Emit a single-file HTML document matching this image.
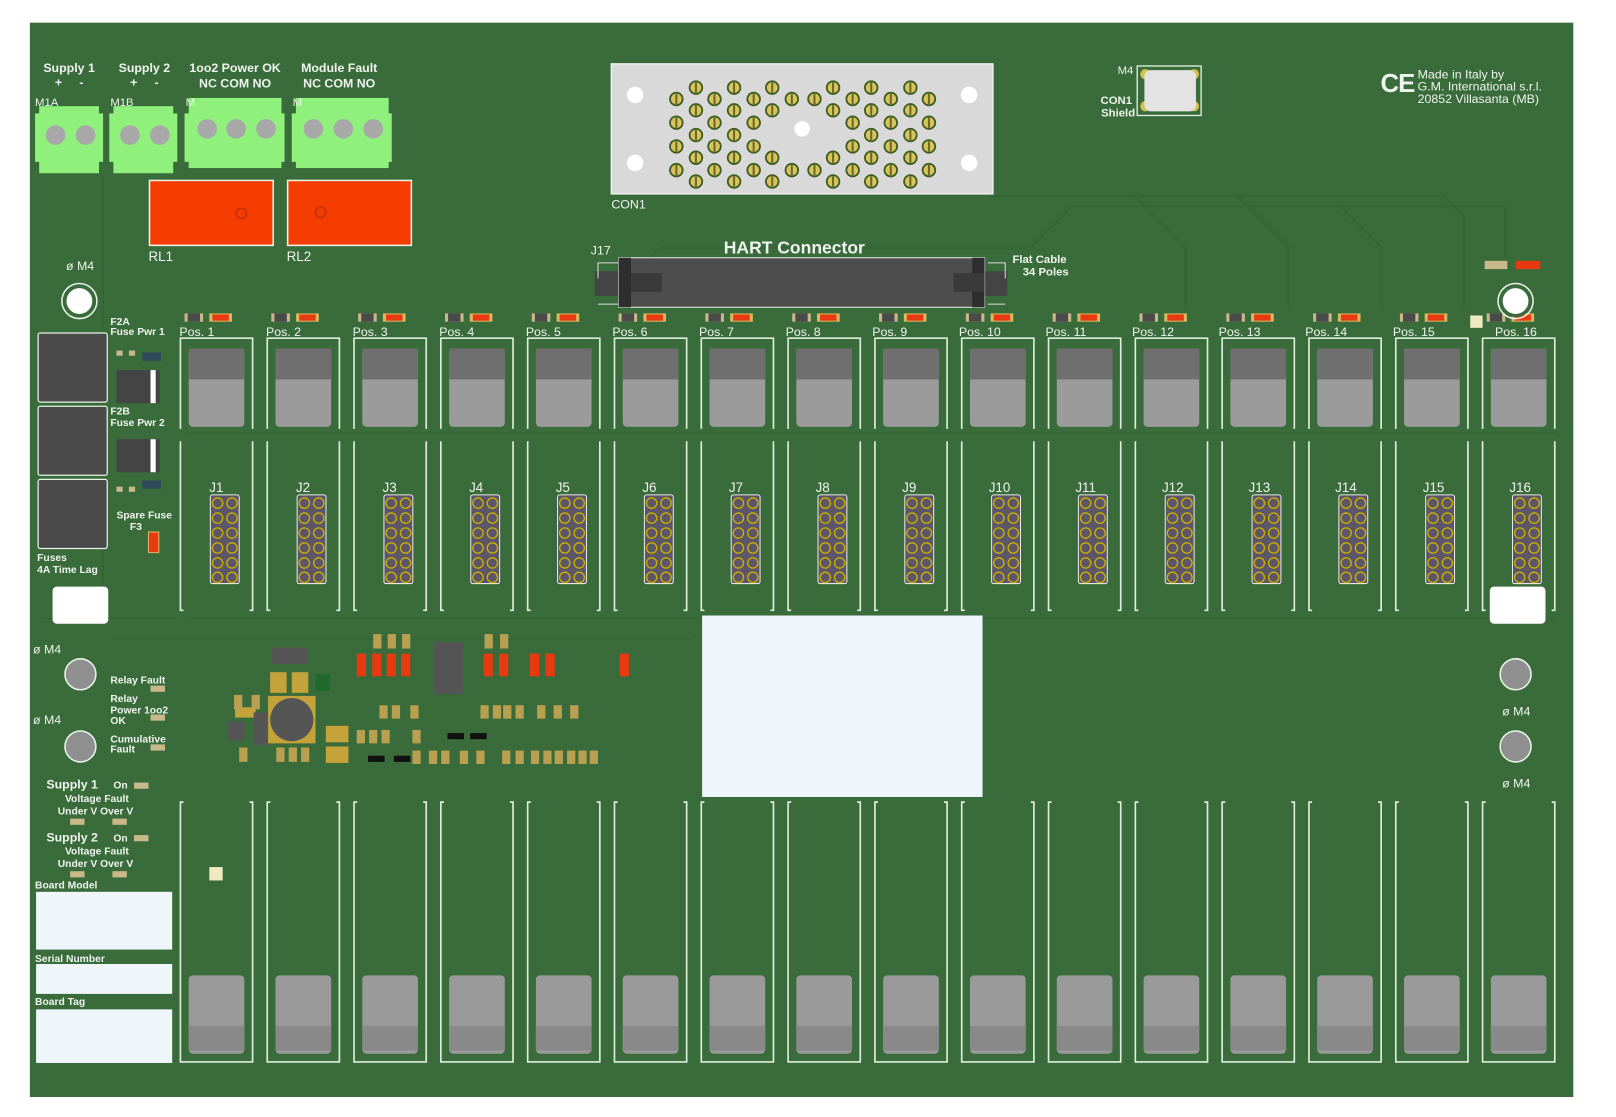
<!DOCTYPE html>
<html><head><meta charset="utf-8"><style>
html,body{margin:0;padding:0;background:#fff;width:1616px;height:1117px;overflow:hidden}
svg{display:block}
text{font-family:"Liberation Sans",sans-serif;fill:#eef4ee}
.b{font-weight:bold}
</style></head><body>
<svg width="1616" height="1117" viewBox="0 0 1567.4 1083.4" xmlns="http://www.w3.org/2000/svg">
<defs>
<g id="col">
 <rect x="4" y="304" width="18" height="8" fill="#c9b98a"/><rect x="7" y="304" width="12" height="8" fill="#4a4a4a"/>
 <rect x="28" y="304" width="22" height="8" fill="#d9b860"/><rect x="31" y="305" width="16" height="6" fill="#e83a10"/>
 <path d="M0,416 V328 H70 V416" stroke="#dcefdc" stroke-width="1.6" fill="none"/>
 <rect x="8" y="338" width="54" height="76" rx="4" fill="#9b9b9b"/>
 <rect x="8" y="338" width="54" height="30" fill="#6f6f6f"/>
 <path d="M0,428 V592 H3 M70,428 V592 H67" stroke="#dcefdc" stroke-width="1.6" fill="none"/>
 <rect x="29" y="480" width="28" height="86" rx="2" fill="#5d5668" stroke="#e8e8e8" stroke-width="1"/>
 <g fill="none" stroke="#c8b000" stroke-width="1.3">
  <circle cx="36" cy="488" r="5"/><circle cx="50" cy="488" r="5"/>
  <circle cx="36" cy="502.5" r="5"/><circle cx="50" cy="502.5" r="5"/>
  <circle cx="36" cy="517" r="5"/><circle cx="50" cy="517" r="5"/>
  <circle cx="36" cy="531.5" r="5"/><circle cx="50" cy="531.5" r="5"/>
  <circle cx="36" cy="546" r="5"/><circle cx="50" cy="546" r="5"/>
  <circle cx="36" cy="560" r="5"/><circle cx="50" cy="560" r="5"/>
 </g>
 <path d="M3,778 H0 V1030 H70 V778 H67" stroke="#dcefdc" stroke-width="1.6" fill="none"/>
 <rect x="8" y="946" width="54" height="76" rx="4" fill="#9a9a9a"/>
 <rect x="8" y="995" width="54" height="24" fill="#898989"/>
</g>
<g id="pin"><circle r="7" fill="#3d5e22"/><circle r="5.2" fill="#d8c45a"/><rect x="-1" y="-5" width="2" height="10" fill="#6a6a30"/></g>
<g id="tb"><circle r="9.5" fill="#a8a8a8"/></g>
</defs>
<rect x="0" y="0" width="1567.4" height="1083.4" fill="#fff"/>
<rect x="29" y="22" width="1497" height="1042" fill="#3a6b3a"/>
<g stroke="#366636" stroke-width="2" fill="none">
<path d="M600,300 V280 L640,240 H1000 L1040,200 H1460 V250"/>
<path d="M960,190 H1400 L1420,210 V300"/>
<path d="M100,170 V600 M110,620 H670 M40,600 H170"/>
<path d="M180,600 H1510 M180,420 H1510"/>
<path d="M1100,190 L1150,240 V300 M1200,190 L1250,240 V300 M1300,200 L1340,240 V300"/>
</g>
<use href="#col" x="175"/><use href="#col" x="259.2"/><use href="#col" x="343.4"/><use href="#col" x="427.6"/>
<use href="#col" x="511.8"/><use href="#col" x="596"/><use href="#col" x="680.2"/><use href="#col" x="764.4"/>
<use href="#col" x="848.6"/><use href="#col" x="932.8"/><use href="#col" x="1017"/><use href="#col" x="1101.2"/>
<use href="#col" x="1185.4"/><use href="#col" x="1269.6"/><use href="#col" x="1353.8"/><use href="#col" x="1438"/>
<g font-size="12">
<text x="174" y="326">Pos. 1</text><text x="258" y="326">Pos. 2</text><text x="342" y="326">Pos. 3</text><text x="426" y="326">Pos. 4</text>
<text x="510" y="326">Pos. 5</text><text x="594" y="326">Pos. 6</text><text x="678" y="326">Pos. 7</text><text x="762" y="326">Pos. 8</text>
<text x="846" y="326">Pos. 9</text><text x="930" y="326">Pos. 10</text><text x="1014" y="326">Pos. 11</text><text x="1098" y="326">Pos. 12</text>
<text x="1182" y="326">Pos. 13</text><text x="1266" y="326">Pos. 14</text><text x="1351" y="326">Pos. 15</text><text x="1450" y="326">Pos. 16</text>
</g>
<g font-size="13">
<text x="203" y="477">J1</text><text x="287" y="477">J2</text><text x="371" y="477">J3</text><text x="455" y="477">J4</text>
<text x="539" y="477">J5</text><text x="623" y="477">J6</text><text x="707" y="477">J7</text><text x="791" y="477">J8</text>
<text x="875" y="477">J9</text><text x="959" y="477">J10</text><text x="1043" y="477">J11</text><text x="1127" y="477">J12</text>
<text x="1211" y="477">J13</text><text x="1295" y="477">J14</text><text x="1380" y="477">J15</text><text x="1464" y="477">J16</text>
</g>
<g fill="#8ff07c">
<rect x="38" y="103" width="58" height="65"/><rect x="34" y="110" width="66" height="47"/>
<rect x="110" y="103" width="58" height="65"/><rect x="106" y="110" width="66" height="47"/>
<rect x="183" y="95" width="90" height="68"/><rect x="179" y="110" width="97" height="47"/>
<rect x="287" y="95" width="90" height="68"/><rect x="283" y="110" width="97" height="47"/>
</g>
<use href="#tb" x="54" y="131"/><use href="#tb" x="83" y="131"/><use href="#tb" x="126" y="131"/><use href="#tb" x="155" y="131"/>
<use href="#tb" x="201" y="125"/><use href="#tb" x="229" y="125"/><use href="#tb" x="258" y="125"/>
<use href="#tb" x="304" y="125"/><use href="#tb" x="333" y="125"/><use href="#tb" x="362" y="125"/>
<g class="b" font-size="12" text-anchor="middle">
<text x="67" y="70">Supply 1</text><text x="67" y="84">+&#160;&#160;&#160;&#160;&#160;-</text>
<text x="140" y="70">Supply 2</text><text x="140" y="84">+&#160;&#160;&#160;&#160;&#160;-</text>
<text x="228" y="70">1oo2 Power OK</text><text x="228" y="85">NC COM NO</text>
<text x="329" y="70">Module Fault</text><text x="329" y="85">NC COM NO</text>
</g>
<g font-size="11"><text x="34" y="103">M1A</text><text x="107" y="103">M1B</text><text x="180" y="103">M</text><text x="284" y="103">M</text></g>
<rect x="145" y="175" width="120" height="63" fill="#f53c00" stroke="#e8f4e8" stroke-width="1.5"/>
<rect x="279" y="175" width="120" height="63" fill="#f53c00" stroke="#e8f4e8" stroke-width="1.5"/>
<circle cx="234" cy="207" r="5" fill="none" stroke="#c03000" stroke-width="1.5"/><circle cx="311" cy="206" r="5" fill="none" stroke="#c03000" stroke-width="1.5"/>
<g font-size="13"><text x="144" y="253">RL1</text><text x="278" y="253">RL2</text></g>
<rect x="593" y="62" width="370" height="126" fill="#d9d9d9" stroke="#eee" stroke-width="1.5"/>
<g fill="#fff"><circle cx="616" cy="92" r="8"/><circle cx="940" cy="92" r="8"/><circle cx="616" cy="158" r="8"/><circle cx="940" cy="158" r="8"/><circle cx="778" cy="125" r="7.5"/></g>
<g>
<use href="#pin" x="656" y="96"/><use href="#pin" x="656" y="119"/><use href="#pin" x="656" y="142"/><use href="#pin" x="656" y="165"/>
<use href="#pin" x="675" y="85"/><use href="#pin" x="675" y="107"/><use href="#pin" x="675" y="131"/><use href="#pin" x="675" y="153"/><use href="#pin" x="675" y="176"/>
<use href="#pin" x="693" y="96"/><use href="#pin" x="693" y="119"/><use href="#pin" x="693" y="142"/><use href="#pin" x="693" y="165"/>
<use href="#pin" x="712" y="85"/><use href="#pin" x="712" y="107"/><use href="#pin" x="712" y="131"/><use href="#pin" x="712" y="153"/><use href="#pin" x="712" y="176"/>
<use href="#pin" x="731" y="96"/><use href="#pin" x="731" y="119"/><use href="#pin" x="731" y="142"/><use href="#pin" x="731" y="165"/>
<use href="#pin" x="749" y="85"/><use href="#pin" x="749" y="107"/><use href="#pin" x="749" y="153"/><use href="#pin" x="749" y="176"/>
<use href="#pin" x="768" y="96"/><use href="#pin" x="768" y="165"/>
<use href="#pin" x="790" y="96"/><use href="#pin" x="790" y="165"/>
<use href="#pin" x="808" y="85"/><use href="#pin" x="808" y="107"/><use href="#pin" x="808" y="153"/><use href="#pin" x="808" y="176"/>
<use href="#pin" x="827" y="96"/><use href="#pin" x="827" y="119"/><use href="#pin" x="827" y="142"/><use href="#pin" x="827" y="165"/>
<use href="#pin" x="845" y="85"/><use href="#pin" x="845" y="107"/><use href="#pin" x="845" y="131"/><use href="#pin" x="845" y="153"/><use href="#pin" x="845" y="176"/>
<use href="#pin" x="864" y="96"/><use href="#pin" x="864" y="119"/><use href="#pin" x="864" y="142"/><use href="#pin" x="864" y="165"/>
<use href="#pin" x="883" y="85"/><use href="#pin" x="883" y="107"/><use href="#pin" x="883" y="131"/><use href="#pin" x="883" y="153"/><use href="#pin" x="883" y="176"/>
<use href="#pin" x="901" y="96"/><use href="#pin" x="901" y="119"/><use href="#pin" x="901" y="142"/><use href="#pin" x="901" y="165"/>
</g>
<text x="593" y="202" font-size="12">CON1</text>
<rect x="577" y="263" width="400" height="24" fill="#444"/>
<rect x="600" y="250" width="355" height="48" fill="#4d4d4d" stroke="#eee" stroke-width="1"/>
<rect x="600" y="250" width="12" height="48" fill="#2e2e2e"/><rect x="943" y="250" width="12" height="48" fill="#2e2e2e"/>
<rect x="612" y="265" width="30" height="18" fill="#3a3a3a"/><rect x="925" y="265" width="30" height="18" fill="#3a3a3a"/>
<path d="M580,270 V255 H600 M580,295 H600 M958,255 H975 V270 M958,295 H975" stroke="#ddd" fill="none"/>
<text x="573" y="247" font-size="12">J17</text>
<text x="702" y="246" font-size="17" class="b">HART Connector</text>
<g class="b" font-size="11"><text x="982" y="255">Flat Cable</text><text x="992" y="267">34 Poles</text></g>
<rect x="1103" y="64" width="62" height="48" fill="none" stroke="#e0eee0" stroke-width="1.3"/>
<circle cx="1111" cy="72" r="5" fill="#d5c050"/><circle cx="1158" cy="72" r="5" fill="#d5c050"/><circle cx="1111" cy="103" r="5" fill="#d5c050"/><circle cx="1158" cy="103" r="5" fill="#d5c050"/>
<rect x="1110" y="68" width="50" height="40" rx="6" fill="#e3e3e3"/>
<text x="1084" y="72" font-size="11">M4</text>
<g class="b" font-size="11" text-anchor="end"><text x="1098" y="101">CON1</text><text x="1101" y="113">Shield</text></g>
<text x="1339" y="89" font-size="25" class="b" letter-spacing="-1">CE</text>
<g font-size="12"><text x="1375" y="76">Made in Italy by</text><text x="1375" y="88">G.M. International s.r.l.</text><text x="1375" y="100">20852 Villasanta (MB)</text></g>
<rect x="1440" y="253" width="22" height="8" fill="#c9b98a"/><rect x="1470" y="253" width="24" height="8" fill="#e83a10"/>
<rect x="1426" y="306" width="12" height="12" fill="#eee9c0"/>
<circle cx="77" cy="292" r="14" fill="#fff" stroke="#3a6b3a" stroke-width="3"/><circle cx="77" cy="292" r="17" fill="none" stroke="#e8f4e8" stroke-width="1.5"/>
<circle cx="1470" cy="292" r="14" fill="#fff" stroke="#3a6b3a" stroke-width="3"/><circle cx="1470" cy="292" r="17" fill="none" stroke="#e8f4e8" stroke-width="1.5"/>
<g fill="#8f8f8f" stroke="#e8f4e8" stroke-width="1.5">
<circle cx="78" cy="654" r="15"/><circle cx="78" cy="724" r="15"/><circle cx="1470" cy="654" r="15"/><circle cx="1470" cy="724" r="15"/>
</g>
<g font-size="12"><text x="64" y="262">ø M4</text><text x="32" y="634">ø M4</text><text x="32" y="702">ø M4</text><text x="1457" y="694">ø M4</text><text x="1457" y="764">ø M4</text></g>
<g fill="#4a4a4a" stroke="#e6f2e6" stroke-width="1.2">
<rect x="37" y="323" width="67" height="67" rx="2"/><rect x="37" y="394" width="67" height="67" rx="2"/><rect x="37" y="465" width="67" height="67" rx="2"/>
</g>
<g fill="#444"><rect x="113" y="359" width="42" height="32"/><rect x="113" y="426" width="42" height="32"/></g>
<rect x="146" y="359" width="5" height="32" fill="#fff"/><rect x="146" y="426" width="5" height="32" fill="#fff"/>
<rect x="144" y="516" width="10" height="20" fill="#e83a10" stroke="#d9b860"/>
<rect x="138" y="342" width="18" height="8" fill="#2f4a5a"/><rect x="138" y="466" width="18" height="8" fill="#2f4a5a"/>
<g fill="#c9b98a"><rect x="113" y="340" width="6" height="5"/><rect x="125" y="340" width="6" height="5"/><rect x="113" y="472" width="6" height="5"/><rect x="125" y="472" width="6" height="5"/></g>
<g class="b" font-size="10"><text x="107" y="315">F2A</text><text x="107" y="325">Fuse Pwr 1</text><text x="107" y="402">F2B</text><text x="107" y="413">Fuse Pwr 2</text>
<text x="113" y="503">Spare Fuse</text><text x="126" y="514">F3</text><text x="36" y="544">Fuses</text><text x="36" y="556">4A Time Lag</text></g>
<rect x="51" y="569" width="54" height="36" rx="4" fill="#fff"/><rect x="1445" y="569" width="54" height="36" rx="4" fill="#fff"/>
<rect x="681" y="597" width="272" height="176" fill="#eef6fb"/>
<g class="b" font-size="10">
<text x="107" y="663">Relay Fault</text><text x="107" y="681">Relay</text><text x="107" y="692">Power 1oo2</text><text x="107" y="702">OK</text>
<text x="107" y="720">Cumulative</text><text x="107" y="730">Fault</text>
<text x="110" y="765">On</text><text x="110" y="816">On</text>
<text x="63" y="778">Voltage Fault</text><text x="56" y="790">Under V Over V</text>
<text x="63" y="829">Voltage Fault</text><text x="56" y="841">Under V Over V</text>
<text x="34" y="862">Board Model</text><text x="34" y="933">Serial Number</text><text x="34" y="975">Board Tag</text>
</g>
<g class="b" font-size="12"><text x="45" y="765">Supply 1</text><text x="45" y="816">Supply 2</text></g>
<g fill="#c9b98a"><rect x="146" y="665" width="14" height="6"/><rect x="146" y="693" width="14" height="6"/><rect x="146" y="722" width="14" height="6"/>
<rect x="130" y="759" width="14" height="6"/><rect x="130" y="810" width="14" height="6"/><rect x="68" y="794" width="14" height="6"/><rect x="109" y="794" width="14" height="6"/><rect x="68" y="845" width="14" height="6"/><rect x="109" y="845" width="14" height="6"/></g>
<g fill="#eef6fa"><rect x="35" y="865" width="132" height="56"/><rect x="35" y="935" width="132" height="29"/><rect x="35" y="979" width="132" height="52"/></g>
<rect x="203" y="841" width="13" height="13" fill="#eee9c0"/>
<g fill="#c4a43a">
<rect x="262" y="652" width="16" height="20"/><rect x="283" y="652" width="16" height="20"/><rect x="316" y="704" width="22" height="16"/><rect x="316" y="724" width="22" height="16"/>
<rect x="260" y="675" width="46" height="46"/><rect x="228" y="686" width="12" height="10"/><rect x="240" y="686" width="8" height="10"/>
</g>
<circle cx="283" cy="698" r="21" fill="#555"/>
<rect x="264" y="628" width="34" height="16" fill="#555"/><rect x="246" y="691" width="14" height="32" fill="#555"/><rect x="221" y="700" width="16" height="18" fill="#555"/>
<rect x="306" y="654" width="14" height="16" fill="#1f6a2a"/>
<rect x="421" y="623" width="28" height="50" fill="#555"/>
<g fill="#e83a10">
<rect x="346" y="634" width="9" height="22"/><rect x="361" y="634" width="9" height="22"/><rect x="375" y="634" width="9" height="22"/><rect x="389" y="634" width="9" height="22"/>
<rect x="469" y="634" width="9" height="22"/><rect x="484" y="634" width="9" height="22"/><rect x="514" y="634" width="9" height="22"/><rect x="529" y="634" width="9" height="22"/><rect x="601" y="634" width="9" height="22"/>
</g>
<g fill="#111"><rect x="357" y="733" width="16" height="6"/><rect x="382" y="733" width="16" height="6"/><rect x="434" y="711" width="16" height="6"/><rect x="456" y="711" width="16" height="6"/></g>
<g fill="#b8a050">
<rect x="362" y="615" width="8" height="14"/><rect x="376" y="615" width="8" height="14"/><rect x="390" y="615" width="8" height="14"/><rect x="470" y="615" width="8" height="14"/><rect x="485" y="615" width="8" height="14"/>
<rect x="368" y="684" width="8" height="13"/><rect x="380" y="684" width="8" height="13"/><rect x="398" y="684" width="8" height="13"/><rect x="466" y="684" width="8" height="13"/><rect x="478" y="684" width="8" height="13"/><rect x="488" y="684" width="8" height="13"/><rect x="500" y="684" width="8" height="13"/><rect x="521" y="684" width="8" height="13"/><rect x="537" y="684" width="8" height="13"/><rect x="553" y="684" width="8" height="13"/>
<rect x="346" y="708" width="8" height="13"/><rect x="358" y="708" width="8" height="13"/><rect x="370" y="708" width="8" height="13"/><rect x="400" y="708" width="8" height="13"/>
<rect x="400" y="728" width="8" height="13"/><rect x="416" y="728" width="8" height="13"/><rect x="428" y="728" width="8" height="13"/><rect x="446" y="728" width="8" height="13"/><rect x="462" y="728" width="8" height="13"/><rect x="487" y="728" width="8" height="13"/><rect x="500" y="728" width="8" height="13"/><rect x="515" y="728" width="8" height="13"/><rect x="527" y="728" width="8" height="13"/><rect x="538" y="728" width="8" height="13"/><rect x="550" y="728" width="8" height="13"/><rect x="561" y="728" width="8" height="13"/><rect x="572" y="728" width="8" height="13"/>
<rect x="232" y="725" width="8" height="14"/><rect x="268" y="725" width="8" height="14"/><rect x="280" y="725" width="8" height="14"/><rect x="292" y="725" width="8" height="14"/>
<rect x="227" y="674" width="8" height="14"/><rect x="244" y="674" width="8" height="14"/>
</g>
</svg>
</body></html>
